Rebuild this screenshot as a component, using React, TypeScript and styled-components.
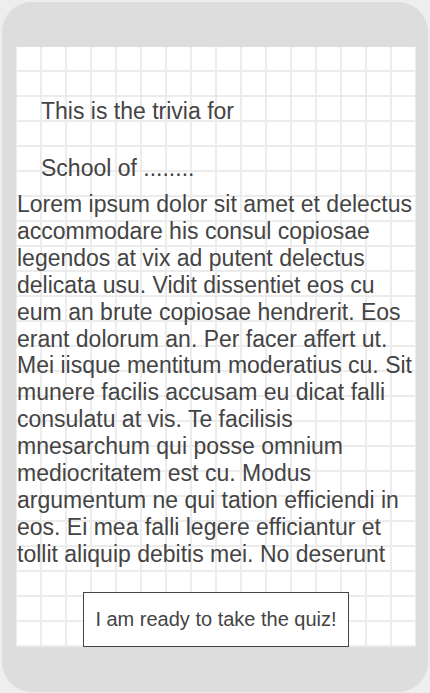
import React from "react";
import styled, { createGlobalStyle } from "styled-components";

const Global = createGlobalStyle`
  html, body {
    margin: 0;
    padding: 0;
    background: #eeeeee;
  }
  body {
    font-family: "Liberation Sans", Arial, sans-serif;
  }
`;

const Phone = styled.div`
  box-sizing: border-box;
  margin: 2px;
  width: 426px;
  height: 690px;
  border-radius: 30px;
  background: #dddddd;
  padding: 45px 12px 45px 14px;
`;

const Screen = styled.div`
  box-sizing: border-box;
  width: 400px;
  height: 600px;
  display: flex;
  flex-direction: column;
  background-color: #ffffff;
  background-image:
    linear-gradient(to right, #ececec 2px, transparent 2px),
    linear-gradient(to bottom, #ececec 2px, transparent 2px);
  background-size: 25px 25px;
  background-position: 24px 23px;
  color: #444444;
  overflow: hidden;
`;

const Intro = styled.div`
  display: flex;
  flex-direction: column;
  gap: 30px;
  padding: 51px 25px 0;
`;

const IntroLine = styled.p`
  margin: 0;
  font-size: 23px;
  line-height: normal;
`;

const Body = styled.p`
  margin: 9px 0 0;
  padding: 0 2px 0 1px;
  font-size: 23px;
  line-height: 26.9px;
`;

const Actions = styled.div`
  margin-top: auto;
  display: flex;
  justify-content: center;
`;

const ReadyButton = styled.button`
  box-sizing: border-box;
  height: 55px;
  padding: 0 11px;
  border: 1px solid #444444;
  background: #ffffff;
  color: #444444;
  font-family: "Liberation Sans", Arial, sans-serif;
  font-size: 20px;
  cursor: pointer;
`;

export default function App() {
  return (
    <>
      <Global />
      <Phone>
        <Screen>
          <Intro>
            <IntroLine>This is the trivia for</IntroLine>
            <IntroLine>School of ........</IntroLine>
          </Intro>
          <Body>
            Lorem ipsum dolor sit amet et delectus accommodare his consul copiosae
            legendos at vix ad putent delectus delicata usu. Vidit dissentiet eos cu
            eum an brute copiosae hendrerit. Eos erant dolorum an. Per facer affert ut.
            Mei iisque mentitum moderatius cu. Sit munere facilis accusam eu dicat falli
            consulatu at vis. Te facilisis mnesarchum qui posse omnium mediocritatem est
            cu. Modus argumentum ne qui tation efficiendi in eos. Ei mea falli legere
            efficiantur et tollit aliquip debitis mei. No deserunt
          </Body>
          <Actions>
            <ReadyButton>I am ready to take the quiz!</ReadyButton>
          </Actions>
        </Screen>
      </Phone>
    </>
  );
}
